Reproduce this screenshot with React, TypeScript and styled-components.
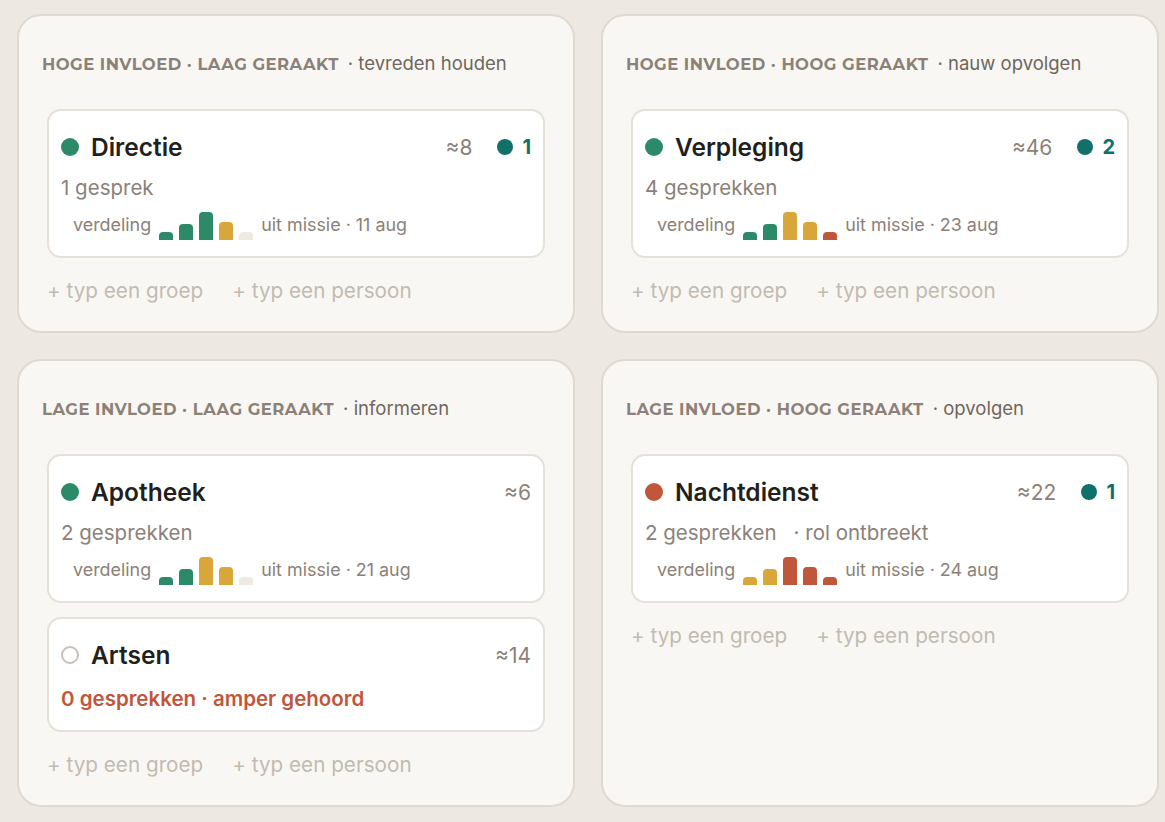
import styled, { createGlobalStyle } from 'styled-components';

const GlobalStyle = createGlobalStyle`
  html, body {
    margin: 0;
    padding: 0;
    background: #ede8e1;
  }
  body {
    font-family: Inter, 'Noto Sans', sans-serif;
    color: #221f1c;
  }
`;

const Color = {
  GREEN: '#2d8a68',
  YELLOW: '#d9a63a',
  RED: '#c0563a',
  EMPTY: '#eeeae3',
  TEAL: '#11706a',
  MUTED: '#8b8178',
  FAINT: '#c2bbb2',
};

type Tone = 'green' | 'red' | 'none';

interface Bar {
  h: number;
  c: string;
}

interface Item {
  name: string;
  tone: Tone;
  approx: number;
  badge?: number;
  talks: string;
  note?: string;
  warn?: boolean;
  bars?: Bar[];
  date?: string;
}

interface Quadrant {
  label: string;
  hint: string;
  items: Item[];
}

const Page = styled.div`
  display: grid;
  grid-template-columns: 558px 558px;
  grid-auto-rows: auto;
  gap: 26px 26px;
  padding: 14px 0 16px 17px;
`;

const Card = styled.section`
  display: flex;
  flex-direction: column;
  background: #f9f7f3;
  border: 2px solid #dfd9d0;
  border-radius: 24px;
  padding: 36px 28px 28px 23px;
`;

const Header = styled.div`
  display: flex;
  align-items: baseline;
  gap: 9px;
  margin-bottom: 35px;
  white-space: nowrap;
`;

const Label = styled.span`
  font-family: Montserrat, 'Noto Sans', sans-serif;
  font-size: 16.4px;
  font-weight: 700;
  letter-spacing: 0.03em;
  color: #8b8178;
`;

const Hint = styled.span`
  font-size: 18.5px;
  color: #6f665d;
`;

const List = styled.div`
  display: flex;
  flex-direction: column;
  gap: 14px;
  padding-left: 5px;
`;

const ItemCard = styled.div`
  background: #ffffff;
  border: 2px solid #e5e0d8;
  border-radius: 14px;
  padding: 22px 12px 16px 12px;
`;

const TitleRow = styled.div`
  display: flex;
  align-items: center;
  height: 28px;
`;

const Dot = styled.span<{ $tone: Tone }>`
  flex-shrink: 0;
  width: 18px;
  height: 18px;
  border-radius: 50%;
  box-sizing: border-box;
  margin-right: 12px;
  background: ${({ $tone }) =>
    $tone === 'green' ? Color.GREEN : $tone === 'red' ? Color.RED : 'transparent'};
  border: ${({ $tone }) => ($tone === 'none' ? '2px solid #c9c1b7' : 'none')};
`;

const Name = styled.h2`
  margin: 0;
  flex-grow: 1;
  font-size: 24.5px;
  font-weight: 600;
  color: #221f1c;
`;

const Approx = styled.span`
  font-size: 21px;
  color: ${Color.MUTED};
`;

const Badge = styled.span`
  display: flex;
  align-items: center;
  gap: 9px;
  margin-left: 25px;
  font-size: 20px;
  font-weight: 700;
  color: ${Color.TEAL};

  &::before {
    content: '';
    width: 16px;
    height: 16px;
    border-radius: 50%;
    background: ${Color.TEAL};
  }
`;

const Talks = styled.div<{ $warn?: boolean }>`
  display: flex;
  gap: 17px;
  margin-top: ${({ $warn }) => ($warn ? 17 : 14)}px;
  margin-bottom: ${({ $warn }) => ($warn ? 3 : 0)}px;
  font-size: 20.5px;
  font-weight: ${({ $warn }) => ($warn ? 600 : 400)};
  color: ${({ $warn }) => ($warn ? Color.RED : Color.MUTED)};
`;

const Distribution = styled.div`
  display: flex;
  align-items: flex-end;
  gap: 8px;
  margin-top: 12px;
  padding-left: 12px;
  font-size: 17.9px;
  color: ${Color.MUTED};
`;

const DistText = styled.span`
  line-height: 20px;
  margin-bottom: 5px;
`;

const Bars = styled.div`
  display: flex;
  align-items: flex-end;
  gap: 6px;
  height: 28px;
`;

const BarPart = styled.span`
  width: 14px;
  border-radius: 4px 4px 0 0;
`;

const AddRow = styled.div`
  display: flex;
  gap: 29px;
  margin-top: 20px;
  padding-left: 5px;
  font-size: 20.7px;
  color: ${Color.FAINT};
`;

const b = (h: number, c: string): Bar => ({ h, c });

const quadrants: Quadrant[] = [
  {
    label: 'HOGE INVLOED · LAAG GERAAKT',
    hint: '· tevreden houden',
    items: [
      {
        name: 'Directie',
        tone: 'green',
        approx: 8,
        badge: 1,
        talks: '1 gesprek',
        bars: [b(8, Color.GREEN), b(16, Color.GREEN), b(28, Color.GREEN), b(18, Color.YELLOW), b(8, Color.EMPTY)],
        date: '11 aug',
      },
    ],
  },
  {
    label: 'HOGE INVLOED · HOOG GERAAKT',
    hint: '· nauw opvolgen',
    items: [
      {
        name: 'Verpleging',
        tone: 'green',
        approx: 46,
        badge: 2,
        talks: '4 gesprekken',
        bars: [b(8, Color.GREEN), b(16, Color.GREEN), b(28, Color.YELLOW), b(18, Color.YELLOW), b(8, Color.RED)],
        date: '23 aug',
      },
    ],
  },
  {
    label: 'LAGE INVLOED · LAAG GERAAKT',
    hint: '· informeren',
    items: [
      {
        name: 'Apotheek',
        tone: 'green',
        approx: 6,
        talks: '2 gesprekken',
        bars: [b(8, Color.GREEN), b(16, Color.GREEN), b(28, Color.YELLOW), b(18, Color.YELLOW), b(8, Color.EMPTY)],
        date: '21 aug',
      },
      {
        name: 'Artsen',
        tone: 'none',
        approx: 14,
        talks: '0 gesprekken · amper gehoord',
        warn: true,
      },
    ],
  },
  {
    label: 'LAGE INVLOED · HOOG GERAAKT',
    hint: '· opvolgen',
    items: [
      {
        name: 'Nachtdienst',
        tone: 'red',
        approx: 22,
        badge: 1,
        talks: '2 gesprekken',
        note: '· rol ontbreekt',
        bars: [b(8, Color.YELLOW), b(16, Color.YELLOW), b(28, Color.RED), b(18, Color.RED), b(8, Color.RED)],
        date: '24 aug',
      },
    ],
  },
];

const StakeholderCard: React.FC<{ item: Item }> = ({ item }) => (
  <ItemCard>
    <TitleRow>
      <Dot $tone={item.tone} />
      <Name>{item.name}</Name>
      <Approx>≈{item.approx}</Approx>
      {item.badge !== undefined && <Badge>{item.badge}</Badge>}
    </TitleRow>
    <Talks $warn={item.warn}>
      <span>{item.talks}</span>
      {item.note && <span>{item.note}</span>}
    </Talks>
    {item.bars && (
      <Distribution>
        <DistText>verdeling</DistText>
        <Bars>
          {item.bars.map((bar, i) => (
            <BarPart key={i} style={{ height: bar.h, background: bar.c }} />
          ))}
        </Bars>
        <DistText>uit missie · {item.date}</DistText>
      </Distribution>
    )}
  </ItemCard>
);

const App: React.FC = () => (
  <>
    <GlobalStyle />
    <Page>
      {quadrants.map((q) => (
        <Card key={q.label}>
          <Header>
            <Label>{q.label}</Label>
            <Hint>{q.hint}</Hint>
          </Header>
          <List>
            {q.items.map((item) => (
              <StakeholderCard key={item.name} item={item} />
            ))}
          </List>
          <AddRow>
            <span>+ typ een groep</span>
            <span>+ typ een persoon</span>
          </AddRow>
        </Card>
      ))}
    </Page>
  </>
);

export default App;
